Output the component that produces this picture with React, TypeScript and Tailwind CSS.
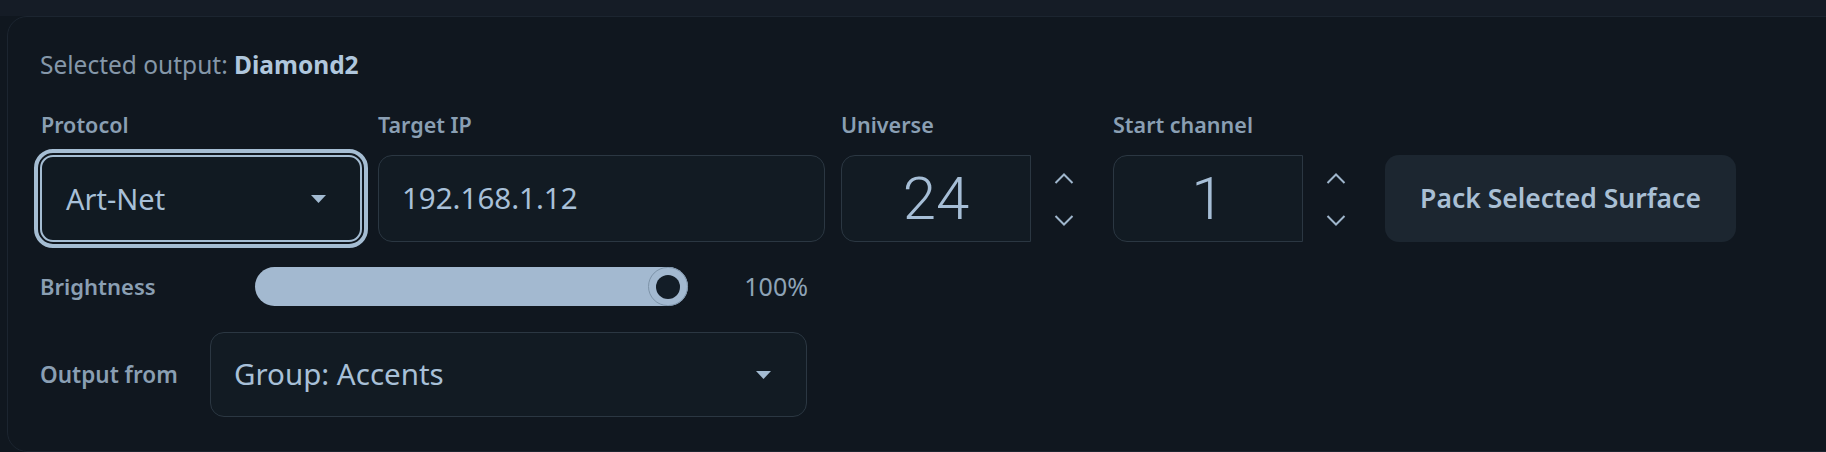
import React from 'react'

function Caret() {
  return (
    <svg width="15" height="8" viewBox="0 0 15 8" className="shrink-0">
      <path d="M0 0h15L7.5 8z" fill="#a3bbd2" />
    </svg>
  )
}

function Spinner() {
  return (
    <div className="flex w-[66px] flex-col items-center justify-center gap-[31px] pt-[2px]">
      <svg width="20" height="11" viewBox="0 0 20 11">
        <polyline points="1.5,10 10,1.5 18.5,10" fill="none" stroke="#9fb6cc" strokeWidth="2" />
      </svg>
      <svg width="20" height="11" viewBox="0 0 20 11">
        <polyline points="1.5,1 10,9.5 18.5,1" fill="none" stroke="#9fb6cc" strokeWidth="2" />
      </svg>
    </div>
  )
}

function NumberField({ label, value }: { label: string; value: string }) {
  return (
    <div className="flex flex-col">
      <div className="mb-[15px] text-[21.5px] font-semibold leading-[30px] text-[#8a9fb3]">{label}</div>
      <div className="flex">
        <div className="flex h-[87px] w-[190px] items-center justify-center rounded-l-[14px] border border-[#2b3742] bg-[#121b23] [font-family:Roboto,sans-serif] text-[60px] font-light text-[#a6bed6]">
          {value}
        </div>
        <Spinner />
      </div>
    </div>
  )
}

export default function App() {
  return (
    <div className="h-[452px] w-full overflow-hidden bg-[#10171f] [font-family:'Noto_Sans',Lato,sans-serif]">
      {/* top strip */}
      <div className="h-[16px] bg-[#151c26]" />

      {/* Panel */}
      <div className="ml-[7px] -mr-6 h-[436px] rounded-[20px] border border-[#1c2530] bg-[#10171f] pl-[32px] pt-[31px]">
        <div className="text-[24.5px] leading-[34px] text-[#8597a9]">
          Selected output: <span className="font-bold text-[#b0c7dd]">Diamond2</span>
        </div>

        {/* Main row */}
        <div className="mt-[28px] flex gap-4">
          <div className="flex flex-col">
            <div className="mb-[15px] pl-[1px] text-[21.5px] font-semibold leading-[30px] text-[#8a9fb3]">Protocol</div>
            <div className="flex h-[87px] w-[322px] items-center justify-between rounded-[13px] border-2 border-[#a5bdd3] bg-[#111a22] pl-[24px] pr-[34px] text-[29px] text-[#a8c0d8] outline-4 outline-offset-2 outline-[#a5bdd3] outline-solid">
              <span>Art-Net</span>
              <Caret />
            </div>
          </div>

          <div className="flex flex-col">
            <div className="mb-[15px] text-[21.5px] font-semibold leading-[30px] text-[#8a9fb3]">Target IP</div>
            <div className="flex h-[87px] w-[447px] items-center rounded-[14px] border border-[#2b3742] bg-[#121b23] px-[23px] text-[29.5px] text-[#a8c0d8]">
              192.168.1.12
            </div>
          </div>

          <NumberField label="Universe" value="24" />
          <NumberField label="Start channel" value="1" />

          <div className="flex flex-col justify-end">
            <button className="flex h-[87px] w-[351px] items-center justify-center rounded-[14px] bg-[#1c2630] text-[26.5px] font-semibold text-[#a9bfd4]">
              Pack Selected Surface
            </button>
          </div>
        </div>

        {/* Brightness */}
        <div className="mt-[25px] flex h-[39px] items-center">
          <div className="w-[215px] text-[22px] font-semibold text-[#8a9fb3]">Brightness</div>
          <div className="flex h-[39px] w-[433px] items-center justify-end rounded-full bg-[#a3b9d0]">
            <div className="flex h-[39px] w-[40px] items-center justify-center rounded-full border border-[#7d93a8] bg-[#a3b9d0]">
              <div className="h-[24px] w-[24px] rounded-full bg-[#131d27]" />
            </div>
          </div>
          <div className="w-[120px] text-right text-[25px] text-[#8ea3b6]">100%</div>
        </div>

        {/* Output from */}
        <div className="mt-[26px] flex items-center">
          <div className="w-[170px] text-[22.5px] font-semibold text-[#8a9fb3]">Output from</div>
          <div className="flex h-[85px] w-[597px] items-center justify-between rounded-[14px] border border-[#2b3742] bg-[#121b23] pl-[23px] pr-[35px] text-[29.5px] text-[#a8c0d8]">
            <span>Group: Accents</span>
            <Caret />
          </div>
        </div>
      </div>
    </div>
  )
}
